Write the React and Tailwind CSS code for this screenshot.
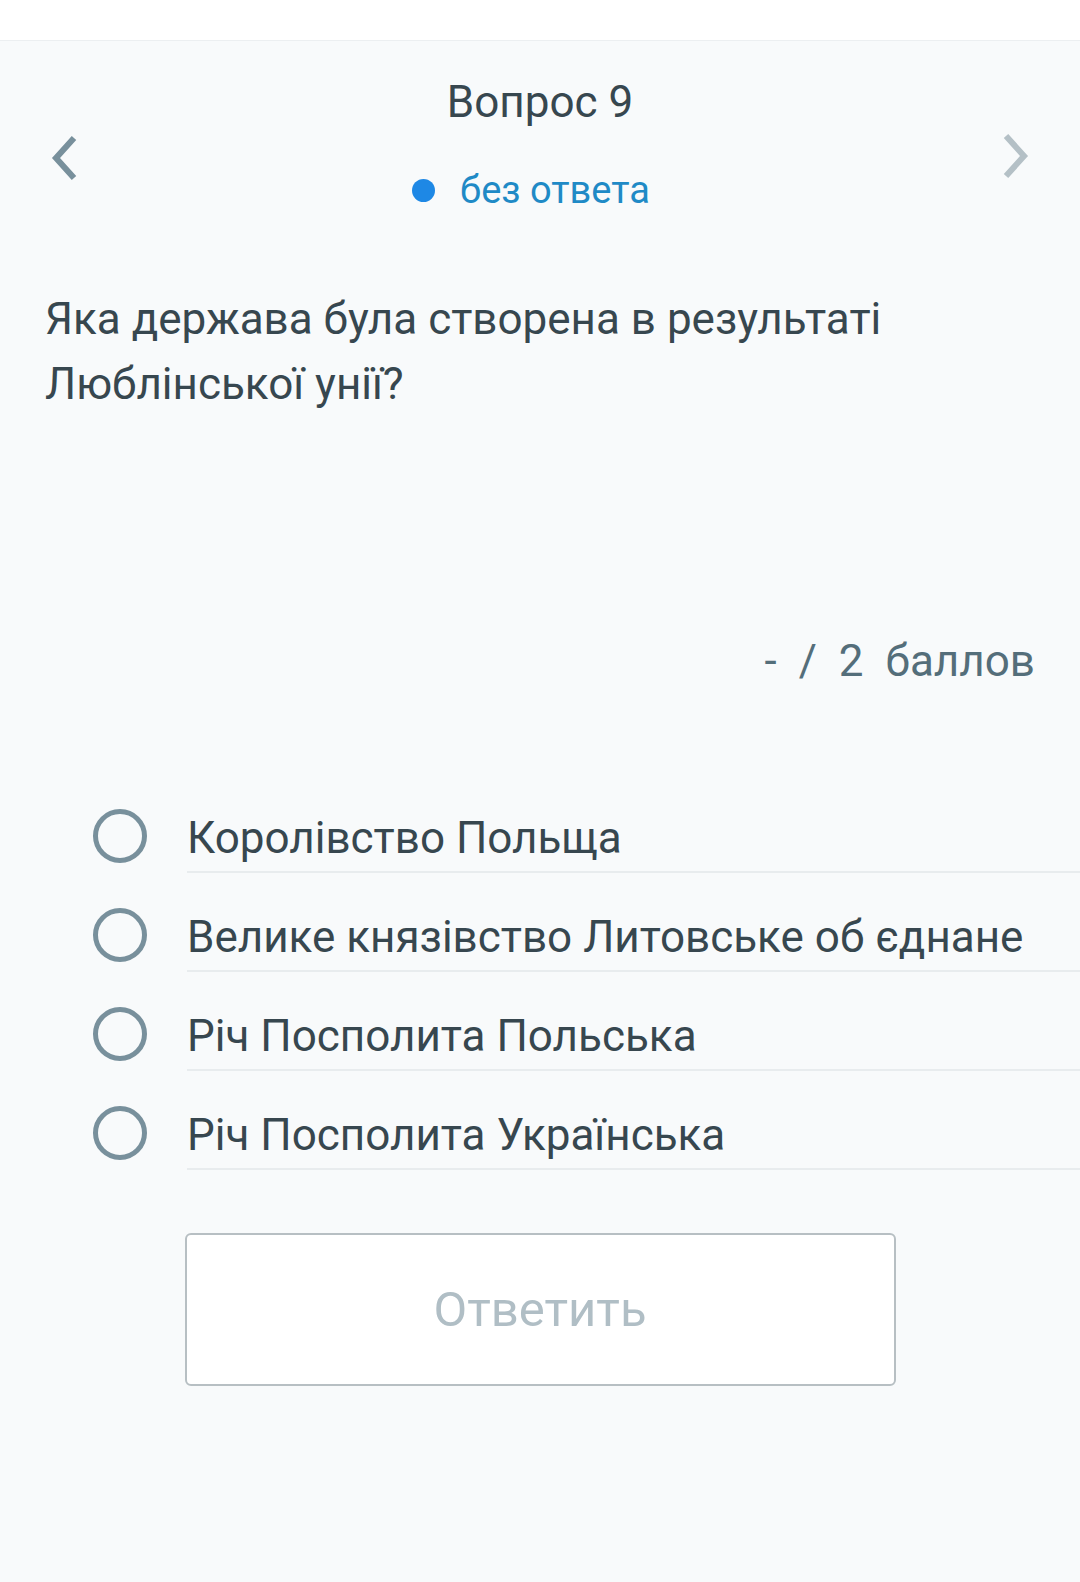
import React from 'react';

const options = [
  "Королівство Польща",
  "Велике князівство Литовське об єднане",
  "Річ Посполита Польська",
  "Річ Посполита Українська",
];

const Chevron = ({ dir = "left", color }) => (
  <svg width="32" height="48" viewBox="0 0 32 48" fill="none">
    {dir === "left" ? (
      <polyline points="26,4 8,24 26,44" stroke={color} strokeWidth="6" strokeLinejoin="miter" />
    ) : (
      <polyline points="6,4 24,24 6,44" stroke={color} strokeWidth="6" strokeLinejoin="miter" />
    )}
  </svg>
);

export default function App() {
  return (
    <div className="min-h-screen bg-[#f8fafb] font-['Roboto',sans-serif] text-[#37474f]">
      {/* top bar */}
      <div className="h-[41px] bg-white border-b border-[#eceff1]" />

      {/* question header */}
      <div className="flex items-start justify-between px-[48px] pt-[36px]">
        <div className="mt-[57px]">
          <Chevron dir="left" color="#78909c" />
        </div>
        <div className="flex flex-col items-center">
          <div className="text-[44px] leading-[50px] text-[#37474f]">Вопрос 9</div>
          <div className="mt-[42px] mr-[18px] flex items-center gap-[25px] text-[38px] leading-[42px] text-[#1f8ac6]">
            <span className="w-[23px] h-[23px] rounded-full bg-[#1e88e5]" />
            <span>без ответа</span>
          </div>
        </div>
        <div className="mt-[55px]">
          <Chevron dir="right" color="#b4c0c6" />
        </div>
      </div>

      {/* question text */}
      <div className="px-[45px] mt-[76px] text-[44px] leading-[65px] text-[#37474f]">
        Яка держава була створена в результаті
        <br />
        Люблінської унії?
      </div>

      {/* score */}
      <div className="mt-[219px] pr-[45px] flex justify-end gap-[22px] text-[44px] leading-[50px] text-[#546e7a]">
        <span>-</span>
        <span>/</span>
        <span>2</span>
        <span>баллов</span>
      </div>

      {/* options */}
      <div className="mt-[88px] flex flex-col">
        {options.map((o) => (
          <div key={o} className="flex items-end pl-[93px]">
            <div className="mb-[10px] w-[54px] h-[54px] shrink-0 rounded-full border-[5px] border-[#78909c]" />
            <div className="ml-[40px] flex-1 pt-[39px] pb-[8px] border-b-2 border-[#e8ecee] text-[44px] leading-[50px] text-[#37474f] whitespace-nowrap">
              {o}
            </div>
          </div>
        ))}
      </div>

      {/* submit */}
      <div className="mt-[63px] flex justify-center">
        <button className="w-[711px] h-[153px] bg-white border-2 border-[#b7bfc3] rounded-[6px] text-[49px] text-[#b0bec5]">
          Ответить
        </button>
      </div>
    </div>
  );
}
